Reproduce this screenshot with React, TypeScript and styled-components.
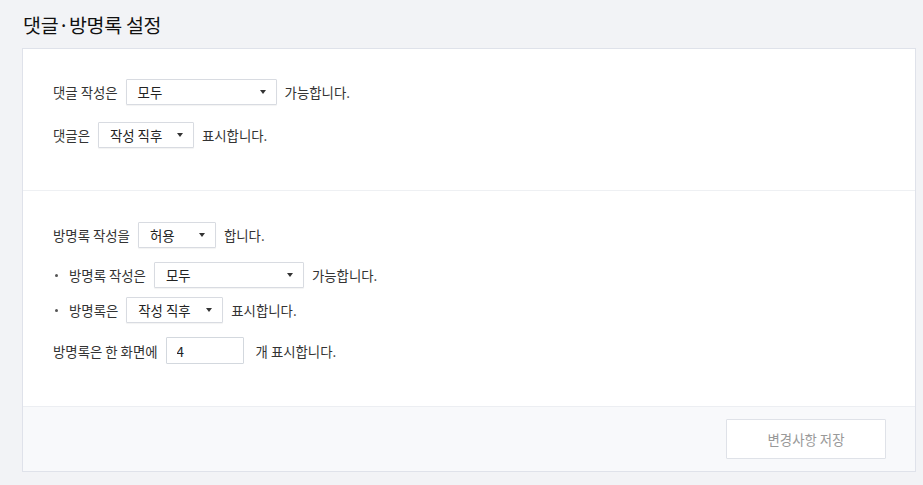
import { FC } from 'react'
import styled, { createGlobalStyle } from 'styled-components'

const GlobalStyle = createGlobalStyle`
  html, body {
    margin: 0;
    padding: 0;
    background: #f2f3f6;
  }
  body {
    font-family: 'Noto Sans CJK KR', 'Noto Sans', sans-serif;
    color: #333;
  }
`

interface SelectProps {
  value: string
  width: number
}

const Select: FC<SelectProps> = ({ value, width }) => (
  <SelectBox $width={width}>
    <span>{value}</span>
    <Caret />
  </SelectBox>
)

const App: FC = () => {
  return (
    <>
      <GlobalStyle />
      <Page>
        <Title>댓글·방명록 설정</Title>
        <Panel>
          <Section>
            <Row>
              댓글 작성은 <Select value="모두" width={151} /> 가능합니다.
            </Row>
            <Row $gap={17}>
              댓글은 <Select value="작성 직후" width={96} /> 표시합니다.
            </Row>
          </Section>
          <Section>
            <Row>
              방명록 작성을 <Select value="허용" width={78} /> 합니다.
            </Row>
            <BulletList>
              <Bullet>
                방명록 작성은 <Select value="모두" width={150} /> 가능합니다.
              </Bullet>
              <Bullet>
                방명록은 <Select value="작성 직후" width={97} /> 표시합니다.
              </Bullet>
            </BulletList>
            <Row>
              방명록은 한 화면에 <NumberInput defaultValue="4" />
              <Suffix>개 표시합니다.</Suffix>
            </Row>
          </Section>
          <Footer>
            <SaveButton disabled>변경사항 저장</SaveButton>
          </Footer>
        </Panel>
      </Page>
    </>
  )
}

const Page = styled('div')`
  width: 923px;
  height: 485px;
  box-sizing: border-box;
  padding: 11px 8px 0 22px;
  overflow: hidden;
`

const Title = styled('h2')`
  margin: 0 0 10px 1px;
  font-size: 19.5px;
  font-weight: 400;
  line-height: 27px;
  color: #111;
  letter-spacing: -0.3px;
`

const Panel = styled('div')`
  width: 894px;
  box-sizing: border-box;
  background: #fff;
  border: 1px solid #dfe2ea;
`

const Section = styled('div')`
  display: flex;
  flex-direction: column;
  padding: 30px 30px 42px;
  gap: 14px;

  & + & {
    border-top: 1px solid #eef0f3;
    padding-top: 31px;
  }
`

const Row = styled('div')<{ $gap?: number }>`
  display: flex;
  align-items: center;
  gap: 8px;
  font-size: 13.4px;
  line-height: 26px;
  color: #333;
  ${({ $gap }) => ($gap ? `margin-top: ${$gap - 14}px;` : '')}
`

const BulletList = styled('ul')`
  display: flex;
  flex-direction: column;
  gap: 9px;
  margin: 0;
  padding: 0;
  list-style: none;
`

const Bullet = styled('li')`
  display: flex;
  align-items: center;
  gap: 8px;
  font-size: 13.4px;
  line-height: 26px;
  color: #333;

  &::before {
    content: '';
    width: 3px;
    height: 3px;
    border-radius: 50%;
    background: #555;
    margin: 0 3px 0 2px;
  }
`

const SelectBox = styled('div')<{ $width: number }>`
  display: flex;
  align-items: center;
  justify-content: space-between;
  box-sizing: border-box;
  width: ${({ $width }) => $width}px;
  height: 26px;
  padding: 0 10px 0 11px;
  border: 1px solid #d8dbe1;
  border-radius: 1px;
  box-shadow: 0 1px 1px rgba(0, 0, 0, 0.05);
  background: #fff;
  color: #222;
  font-size: 13.4px;
`

const Caret = styled('i')`
  width: 0;
  height: 0;
  border-left: 3px solid transparent;
  border-right: 3px solid transparent;
  border-top: 4px solid #333;
`

const NumberInput = styled('input')`
  box-sizing: border-box;
  width: 78px;
  height: 27px;
  padding: 0 10px;
  border: 1px solid #d3d8de;
  border-radius: 1px;
  font-family: inherit;
  font-size: 13.4px;
  color: #222;
  outline: none;
`

const Suffix = styled('span')`
  margin-left: 4px;
`

const Footer = styled('div')`
  display: flex;
  justify-content: flex-end;
  padding: 12px 29px 12px;
  background: #f8f9fb;
  border-top: 1px solid #eceef2;
`

const SaveButton = styled('button')`
  width: 160px;
  height: 40px;
  background: #fff;
  border: 1px solid #dfe2e8;
  border-radius: 1px;
  font-family: inherit;
  font-size: 13.4px;
  color: #999;
  cursor: default;
`

export default App
